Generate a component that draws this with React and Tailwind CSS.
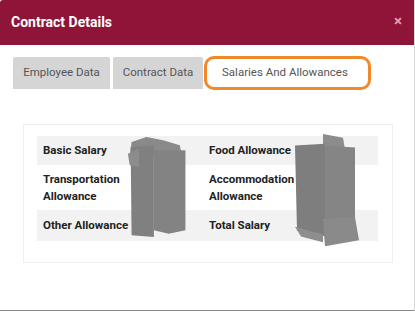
import React from "react";

const rows = [
    { a: ["Basic Salary"], b: ["Food Allowance"], shade: true, h: "h-[29px]" },
    { a: ["Transportation", "Allowance"], b: ["Accommodation", "Allowance"], shade: false, h: "h-[45px]" },
    { a: ["Other Allowance"], b: ["Total Salary"], shade: true, h: "h-[31px]" },
];

const Blotch = ({ className, shapes }) => (
    <svg className={className} viewBox="0 0 70 120" preserveAspectRatio="none">
        {shapes.map((s, i) => (
            <polygon key={i} points={s.p} fill={s.c} />
        ))}
    </svg>
);

const Label = ({ lines }) => (
    <div className="pl-[6px] whitespace-nowrap text-[11.5px] font-bold text-[#222] leading-[17px]">
        {lines.map((l, i) => (
            <div key={i}>{l}</div>
        ))}
    </div>
);

const App = () => {
    return (
        <div className="w-[415px] h-[311px] bg-white font-['Roboto',sans-serif] overflow-hidden">
            <div className="w-[415px] h-[311px] border-r border-b border-r-[#d8d8d8] border-b-[#8a8a8a] flex flex-col">
                <div className="h-[45px] bg-[#8e1538] flex items-center justify-between pl-[11px] pr-[12px] rounded-tl-[3px]">
                    <span className="text-white text-[14px] font-bold">Contract Details</span>
                    <span className="text-[#e89ab0] text-[15px] font-bold leading-none -mt-[2px]">×</span>
                </div>

                <div className="flex pl-[13px] pt-[12px] gap-[3px]">
                    <div className="w-[97px] h-[32px] bg-[#d5d5d5] rounded-t-[2px] flex items-center justify-center text-[11.5px] text-[#555]">
                        Employee Data
                    </div>
                    <div className="w-[90px] h-[32px] bg-[#d5d5d5] rounded-t-[2px] flex items-center justify-center text-[11.5px] text-[#555]">
                        Contract Data
                    </div>
                    <div className="relative w-[165px] h-[32px] bg-white flex items-center pl-[16px] text-[11.5px] text-[#555]">
                        Salaries And Allowances
                        <div className="absolute -left-[2px] -top-[1px] w-[167px] h-[34px] border-[3px] border-[#f0892a] rounded-[10px]" />
                    </div>
                </div>

                <div className="ml-[23px] mt-[35px] w-[370px] border border-[#efefef] pt-[11px] pb-[21px] pl-[13px]">
                    <div className="relative w-[341px]">
                        {rows.map((r, i) => (
                            <div
                                key={i}
                                className={`grid grid-cols-[86px_80px_87px_88px] items-center ${r.h} ${r.shade ? "bg-[#f2f2f2]" : "bg-white"}`}
                            >
                                <Label lines={r.a} />
                                <div />
                                <Label lines={r.b} />
                                <div />
                            </div>
                        ))}
                        <Blotch
                            className="absolute left-[89px] top-[1px] w-[65px] h-[100px]"
                            shapes={[
                                { p: "6,6 22,0 40,4 58,10 60,22 4,24", c: "#8a8a8a" },
                                { p: "5,12 30,10 30,120 6,118", c: "#808080" },
                                { p: "30,16 64,16 64,112 46,116 30,112", c: "#838383" },
                                { p: "2,20 14,14 14,36 4,34", c: "#8c8c8c" },
                            ]}
                        />
                        <Blotch
                            className="absolute left-[256px] top-[-2px] w-[70px] h-[116px]"
                            shapes={[
                                { p: "30,0 50,4 52,16 30,14", c: "#8c8c8c" },
                                { p: "2,12 32,10 34,106 4,100", c: "#7e7e7e" },
                                { p: "32,12 62,14 62,100 32,104", c: "#858585" },
                                { p: "30,88 62,86 66,110 32,116", c: "#8a8a8a" },
                                { p: "2,96 30,104 30,112 8,106", c: "#8e8e8e" },
                            ]}
                        />
                    </div>
                </div>
            </div>
        </div>
    );
};

export default App;
